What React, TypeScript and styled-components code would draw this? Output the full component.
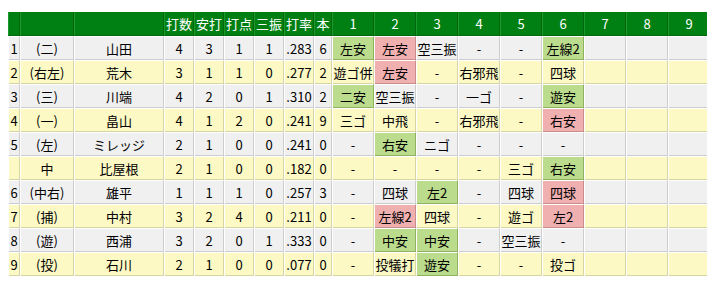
import React from 'react';
import styled, { createGlobalStyle } from 'styled-components';

const GlobalStyle = createGlobalStyle`
  body {
    margin: 8px;
    background: #ffffff;
    font-family: "Noto Sans CJK JP", "DejaVu Sans", sans-serif;
  }
`;

type Tone = 'grey' | 'yellow';
type Hit = 'none' | 'green' | 'pink';

const rowBg = { grey: '#f0f0f0', yellow: '#fcf9c4' };
const rowLine = { grey: '#cdcdcd', yellow: '#d8d4a4' };
const hitBg = { green: '#badc8c', pink: '#f0b0b0' };
const hitLine = { green: '#8fb25e', pink: '#c98c8c' };

const Board = styled.div`
  margin-top: 4px;
  display: grid;
  grid-template-columns: 12px 54px 90px repeat(5, 30px) 18px repeat(9, 42px);
  grid-auto-rows: 24px;
  width: 702px;
  background: #ffffff;
`;

const HeadCell = styled.div`
  box-sizing: border-box;
  background: #008012;
  border-right: 1px solid #00650c;
  border-bottom: 1px solid #00650c;
  border-left: 1px solid #1a9a2a;
  color: #ffffff;
  font-size: 13px;
  display: flex;
  align-items: center;
  justify-content: center;
  white-space: nowrap;
`;

const Cell = styled.div<{ $tone: Tone; $hit?: Hit }>`
  box-sizing: border-box;
  margin: 0 0 0 1px;
  background: ${(p) => (p.$hit && p.$hit !== 'none' ? hitBg[p.$hit] : rowBg[p.$tone])};
  border-right: 1px solid
    ${(p) => (p.$hit && p.$hit !== 'none' ? hitLine[p.$hit] : rowLine[p.$tone])};
  border-bottom: 1px solid
    ${(p) => (p.$hit && p.$hit !== 'none' ? hitLine[p.$hit] : rowLine[p.$tone])};
  border-top: 1px solid #ffffff;
  color: #000000;
  font-size: 13px;
  display: flex;
  align-items: center;
  justify-content: center;
  white-space: nowrap;
  overflow: hidden;
`;

type Row = {
  no: string;
  pos: string;
  name: string;
  stats: string[];
  innings: [string, Hit][];
};

const g = (t: string): [string, Hit] => [t, 'green'];
const p = (t: string): [string, Hit] => [t, 'pink'];
const n = (t: string): [string, Hit] => [t, 'none'];
const blank: [string, Hit][] = [n(''), n(''), n('')];

const rows: Row[] = [
  { no: '1', pos: '(二)', name: '山田', stats: ['4', '3', '1', '1', '.283', '6'],
    innings: [g('左安'), p('左安'), n('空三振'), n('-'), n('-'), g('左線2'), ...blank] },
  { no: '2', pos: '(右左)', name: '荒木', stats: ['3', '1', '1', '0', '.277', '2'],
    innings: [n('遊ゴ併'), p('左安'), n('-'), n('右邪飛'), n('-'), n('四球'), ...blank] },
  { no: '3', pos: '(三)', name: '川端', stats: ['4', '2', '0', '1', '.310', '2'],
    innings: [g('二安'), n('空三振'), n('-'), n('一ゴ'), n('-'), g('遊安'), ...blank] },
  { no: '4', pos: '(一)', name: '畠山', stats: ['4', '1', '2', '0', '.241', '9'],
    innings: [n('三ゴ'), n('中飛'), n('-'), n('右邪飛'), n('-'), p('右安'), ...blank] },
  { no: '5', pos: '(左)', name: 'ミレッジ', stats: ['2', '1', '0', '0', '.241', '0'],
    innings: [n('-'), g('右安'), n('ニゴ'), n('-'), n('-'), n('-'), ...blank] },
  { no: '', pos: '中', name: '比屋根', stats: ['2', '1', '0', '0', '.182', '0'],
    innings: [n('-'), n('-'), n('-'), n('-'), n('三ゴ'), g('右安'), ...blank] },
  { no: '6', pos: '(中右)', name: '雄平', stats: ['1', '1', '1', '0', '.257', '3'],
    innings: [n('-'), n('四球'), g('左2'), n('-'), n('四球'), p('四球'), ...blank] },
  { no: '7', pos: '(捕)', name: '中村', stats: ['3', '2', '4', '0', '.211', '0'],
    innings: [n('-'), p('左線2'), n('四球'), n('-'), n('遊ゴ'), p('左2'), ...blank] },
  { no: '8', pos: '(遊)', name: '西浦', stats: ['3', '2', '0', '1', '.333', '0'],
    innings: [n('-'), g('中安'), g('中安'), n('-'), n('空三振'), n('-'), ...blank] },
  { no: '9', pos: '(投)', name: '石川', stats: ['2', '1', '0', '0', '.077', '0'],
    innings: [n('-'), n('投犠打'), g('遊安'), n('-'), n('-'), n('投ゴ'), ...blank] },
];

const heads = ['', '', '', '打数', '安打', '打点', '三振', '打率', '本', '1', '2', '3', '4', '5', '6', '7', '8', '9'];

export default function App() {
  return (
    <>
      <GlobalStyle />
      <Board>
        {heads.map((h, i) => (
          <HeadCell key={`h${i}`}>{h}</HeadCell>
        ))}
        {rows.map((r, ri) => {
          const tone: Tone = ri % 2 === 0 ? 'grey' : 'yellow';
          return (
            <React.Fragment key={ri}>
              <Cell $tone={tone}>{r.no}</Cell>
              <Cell $tone={tone}>{r.pos}</Cell>
              <Cell $tone={tone}>{r.name}</Cell>
              {r.stats.map((s, si) => (
                <Cell key={`s${si}`} $tone={tone}>{s}</Cell>
              ))}
              {r.innings.map(([t, hit], ii) => (
                <Cell key={`i${ii}`} $tone={tone} $hit={hit}>{t}</Cell>
              ))}
            </React.Fragment>
          );
        })}
      </Board>
    </>
  );
}
